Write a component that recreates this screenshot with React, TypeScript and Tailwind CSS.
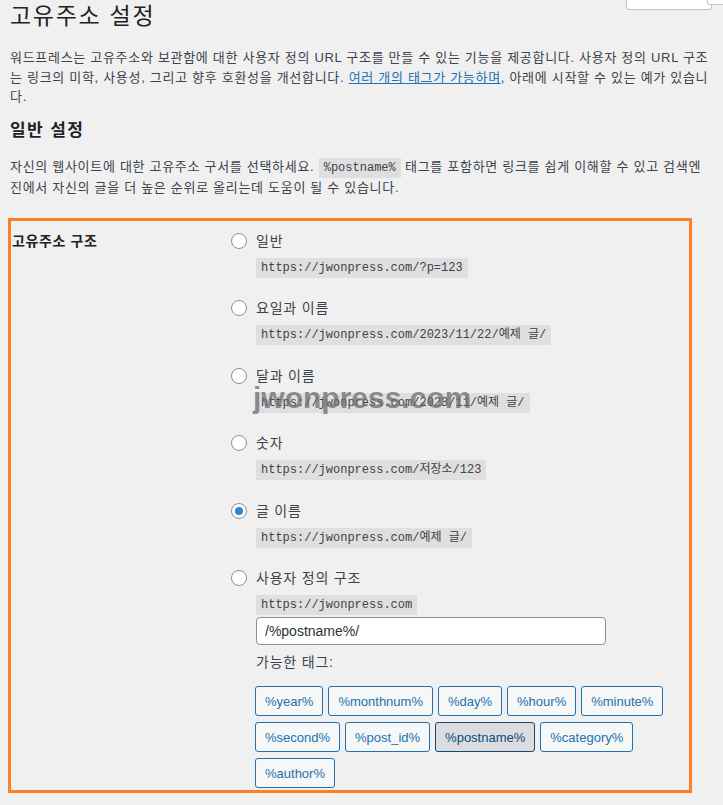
import { useState } from 'react'

const sans = "font-['Liberation_Sans','Noto_Sans_CJK_KR',sans-serif]"
const mono = "font-['Liberation_Mono','Noto_Sans_CJK_KR',monospace]"

const options = [
  { id: 'plain', label: '일반', sample: 'https://jwonpress.com/?p=123' },
  { id: 'day', label: '요일과 이름', sample: 'https://jwonpress.com/2023/11/22/예제 글/' },
  { id: 'month', label: '달과 이름', sample: 'https://jwonpress.com/2023/11/예제 글/' },
  { id: 'numeric', label: '숫자', sample: 'https://jwonpress.com/저장소/123' },
  { id: 'postname', label: '글 이름', sample: 'https://jwonpress.com/예제 글/' },
]

const tags = [
  '%year%',
  '%monthnum%',
  '%day%',
  '%hour%',
  '%minute%',
  '%second%',
  '%post_id%',
  '%postname%',
  '%category%',
  '%author%',
]

function Radio({ checked, onClick }: { checked: boolean; onClick: () => void }) {
  return (
    <button
      onClick={onClick}
      className="flex h-4 w-4 shrink-0 items-center justify-center rounded-full border border-[#8c8f94] bg-white"
    >
      {checked && <span className="h-2 w-2 rounded-full bg-[#3582c4]" />}
    </button>
  )
}

export default function App() {
  const [selected, setSelected] = useState('postname')
  const [structure, setStructure] = useState('/%postname%/')

  return (
    <div className={`relative min-h-screen overflow-hidden bg-[#f0f0f1] text-[#3c434a] ${sans}`}>
      {/* screen meta tabs, cut off at top */}
      <div className="absolute left-[626px] top-0 h-[10px] w-[86px] rounded-b-[3px] border border-t-0 border-[#c3c4c7] bg-white" />
      <div className="absolute left-[707px] top-0 h-[5px] w-[20px] rounded-bl-[3px] border border-t-0 border-[#c3c4c7] bg-white" />

      <div className="px-[10px]">
        <h1 className="pt-px text-[23px] leading-[30px] tracking-[1.7px] text-[#1d2327]">고유주소 설정</h1>

        <p className="mt-[17px] whitespace-nowrap text-[13px] leading-[19.5px] tracking-[0.7px]">
          워드프레스는 고유주소와 보관함에 대한 사용자 정의 URL 구조를 만들 수 있는 기능을 제공합니다. 사용자 정의 URL 구조
          <br />는 링크의 미학, 사용성, 그리고 향후 호환성을 개선합니다.{' '}
          <a href="#" className="text-[#2271b1] underline">
            여러 개의 태그가 가능하며
          </a>
          , 아래에 시작할 수 있는 예가 있습니
          <br />
          다.
        </p>

        <h2 className="mt-[13px] text-[17px] font-semibold leading-[22px] tracking-[1.4px] text-[#1d2327]">일반 설정</h2>

        <p className="mt-[15px] whitespace-nowrap text-[13px] leading-5 tracking-[0.7px]">
          자신의 웹사이트에 대한 고유주소 구서를 선택하세요.{' '}
          <code className={`bg-[#dfdfe0] px-[5px] py-[3px] text-[12px] tracking-normal ${mono}`}>%postname%</code> 태그를
          포함하면 링크를 쉽게 이해할 수 있고 검색엔
          <br />
          진에서 자신의 글을 더 높은 순위로 올리는데 도움이 될 수 있습니다.
        </p>
      </div>

      <div className="mt-[20px] ml-[8px] flex w-[684px] border-[3px] border-[#ff7f27] pt-[10px] pb-[2px]">
        <div className="w-[220px] shrink-0 pl-px text-[14px] font-semibold leading-5 tracking-[0.6px] text-[#1d2327]">
          고유주소 구조
        </div>

        <div className="flex flex-col gap-[20.6px]">
          {options.map((o) => (
            <div key={o.id}>
              <div className="flex items-center gap-[9px]">
                <Radio checked={selected === o.id} onClick={() => setSelected(o.id)} />
                <span className="text-[14px] leading-5 tracking-[0.8px]">{o.label}</span>
              </div>
              <code
                className={`ml-[25px] mt-[7px] inline-block h-5 whitespace-pre bg-[#dfdfe0] px-[5px] text-[12px] leading-5 ${mono}`}
              >
                {o.sample}
              </code>
            </div>
          ))}

          <div>
            <div className="flex items-center gap-[9px]">
              <Radio checked={selected === 'custom'} onClick={() => setSelected('custom')} />
              <span className="text-[14px] leading-5 tracking-[0.8px]">사용자 정의 구조</span>
            </div>
            <div className="ml-[25px]">
              <code className={`mt-[7px] inline-block h-5 bg-[#dfdfe0] px-[5px] text-[12px] leading-5 ${mono}`}>
                https://jwonpress.com
              </code>
              <input
                value={structure}
                onChange={(e) => setStructure(e.target.value)}
                className="mt-[2px] block h-7 w-[350px] rounded-[4px] border border-[#8c8f94] bg-white px-2 text-[14px] text-[#2c3338] outline-none"
              />
              <div className="mt-[7px] text-[14px] leading-5 tracking-[0.8px]">가능한 태그:</div>
              <div className="mt-[14px] -ml-px flex w-[436px] flex-wrap gap-x-[5px] gap-y-[6px]">
                {tags.map((t) => {
                  const active = structure.includes(t)
                  return (
                    <button
                      key={t}
                      onClick={() => setStructure(active ? structure.replace(t, '') : structure + t)}
                      className={
                        active
                          ? 'h-[30px] rounded-[3px] border border-[#0a4b78] bg-[#dcdcde] px-[9px] text-[13px] text-[#0a4b78]'
                          : 'h-[30px] rounded-[3px] border border-[#2271b1] bg-[#f6f7f7] px-[9px] text-[13px] text-[#2271b1]'
                      }
                    >
                      {t}
                    </button>
                  )
                })}
              </div>
            </div>
          </div>
        </div>
      </div>

      {/* watermark */}
      <div className="pointer-events-none absolute left-[253px] top-[383px] text-[30px] font-bold leading-[30px] text-[#6e6e6e]/75">
        jwonpress.com
      </div>
    </div>
  )
}
